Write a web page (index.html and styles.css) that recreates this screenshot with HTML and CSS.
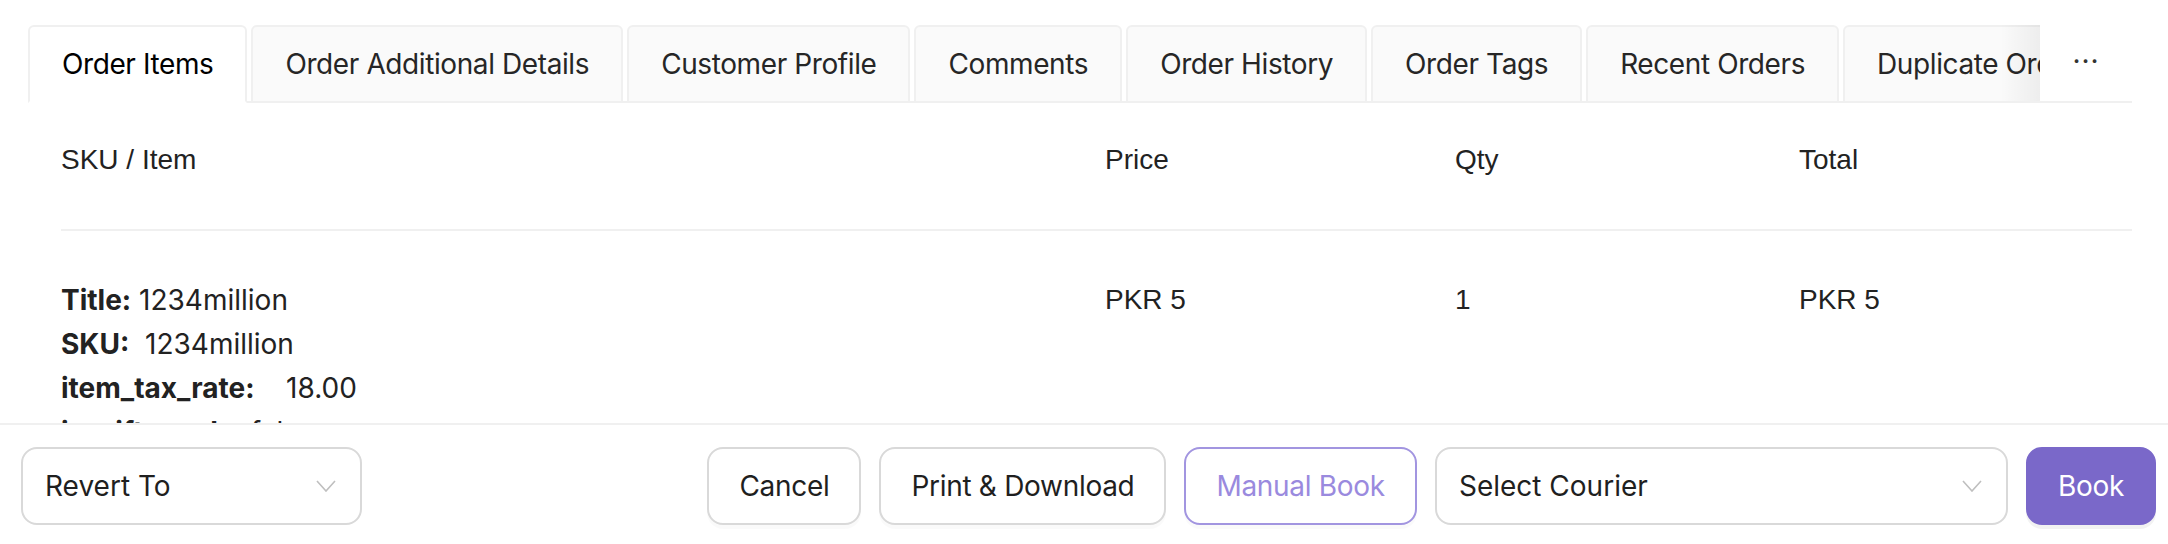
FILE: index.html
```html
<!DOCTYPE html>
<html lang="en">

<head>
    <meta charset="UTF-8">
    <meta name="viewport" content="width=device-width, initial-scale=1.0">
    <title>Order Details</title>
    <link rel="stylesheet" href="styles.css">
</head>

<body>
    <div class="pagina">
        <!-- abas -->
        <div class="abas">
            <div class="abas_lista">
                <div class="aba ativa">Order Items</div>
                <div class="aba">Order Additional Details</div>
                <div class="aba">Customer Profile</div>
                <div class="aba">Comments</div>
                <div class="aba">Order History</div>
                <div class="aba">Order Tags</div>
                <div class="aba">Recent Orders</div>
                <div class="aba">Duplicate Orders</div>
                <div class="aba">Logs</div>
            </div>
            <div class="abas_mais">&middot;&middot;&middot;</div>
        </div>

        <div class="conteudo">
            <table>
                <colgroup>
                    <col class="col_item">
                    <col class="col_preco">
                    <col class="col_qtd">
                    <col>
                </colgroup>
                <thead>
                    <tr>
                        <th>SKU / Item</th>
                        <th>Price</th>
                        <th>Qty</th>
                        <th>Total</th>
                    </tr>
                </thead>
                <tbody>
                    <tr>
                        <td class="detalhes">
                            <p><strong>Title:</strong> 1234million</p>
                            <p><strong>SKU:</strong>&nbsp; 1234million</p>
                            <p><strong>item_tax_rate:</strong>&nbsp;&nbsp;&nbsp; 18.00</p>
                            <p><strong>is_gift_card:</strong>&nbsp;&nbsp; false</p>
                        </td>
                        <td>PKR 5</td>
                        <td>1</td>
                        <td>PKR 5</td>
                    </tr>
                </tbody>
            </table>
        </div>

        <div class="rodape">
            <div class="seletor seletor_reverter">
                <span>Revert To</span>
                <svg class="seta" width="20" height="12" viewBox="0 0 20 12"><polyline points="1,1 10,11 19,1" fill="none" stroke="#bfbfbf" stroke-width="1.6"/></svg>
            </div>
            <div class="acoes">
                <button class="botao">Cancel</button>
                <button class="botao">Print &amp; Download</button>
                <button class="botao botao_contorno">Manual Book</button>
                <div class="seletor seletor_courier">
                    <span>Select Courier</span>
                    <svg class="seta" width="20" height="12" viewBox="0 0 20 12"><polyline points="1,1 10,11 19,1" fill="none" stroke="#bfbfbf" stroke-width="1.6"/></svg>
                </div>
                <button class="botao botao_primario">Book</button>
            </div>
        </div>
    </div>
</body>

</html>
```

FILE: styles.css
```css
* {
    margin: 0;
    padding: 0;
    box-sizing: border-box;
}

body {
    font-family: Inter, "Noto Sans", sans-serif;
    font-size: 28px;
    color: #1f1f1f;
    background: #fff;
}

.pagina {
    height: 544px;
    display: flex;
    flex-direction: column;
    overflow: hidden;
}

/* abas */
.abas {
    display: flex;
    margin: 25px 36px 0 28px;
    position: relative;
}

.abas::before {
    content: "";
    position: absolute;
    left: 0;
    right: 0;
    bottom: 0;
    border-bottom: 2px solid #f0f0f0;
}

.abas_lista {
    display: flex;
    gap: 4px;
    width: 2012px;
    overflow: hidden;
    position: relative;
}

.abas_lista::after {
    content: "";
    position: absolute;
    top: 0;
    right: 0;
    bottom: 2px;
    width: 40px;
    background: linear-gradient(to right, rgba(0, 0, 0, 0), rgba(0, 0, 0, 0.05));
}

.aba {
    flex: none;
    padding: 15px 32px;
    line-height: 44px;
    letter-spacing: -0.4px;
    background: #fafafa;
    border: 2px solid #f0f0f0;
    border-radius: 6px 6px 0 0;
    color: #262626;
    position: relative;
}

.aba.ativa {
    background: #fff;
    border-bottom-color: #fff;
    color: #000;
}

.abas_mais {
    flex: 1;
    display: flex;
    align-items: center;
    justify-content: center;
    color: #333;
    letter-spacing: 1px;
    padding-bottom: 6px;
}

/* tabela */
.conteudo {
    flex: 1;
    overflow: hidden;
    padding: 0 36px 0 61px;
}

table {
    width: 100%;
    border-collapse: collapse;
    table-layout: fixed;
}

.col_item {
    width: 1044px;
}

.col_preco {
    width: 350px;
}

.col_qtd {
    width: 344px;
}

th {
    font-family: "Liberation Sans", Arial, sans-serif;
    font-weight: normal;
    text-align: left;
    line-height: 44px;
    padding: 35px 0 47px;
    color: #222;
    border-bottom: 2px solid #f0f0f0;
}

td {
    font-family: "Liberation Sans", Arial, sans-serif;
    vertical-align: top;
    line-height: 44px;
    padding: 47px 0 0;
    color: #222;
}

td.detalhes {
    font-family: Inter, "Noto Sans", sans-serif;
}

.detalhes strong {
    font-weight: 700;
}

/* rodape */
.rodape {
    height: 121px;
    flex: none;
    border-top: 2px solid #f0f0f0;
    padding: 22px 12px 0 21px;
    display: flex;
    justify-content: space-between;
    align-items: flex-start;
}

.acoes {
    display: flex;
    gap: 18px;
}

.seletor {
    height: 78px;
    border: 2px solid #d9d9d9;
    border-radius: 16px;
    display: flex;
    align-items: center;
    justify-content: space-between;
    padding: 0 24px 0 22px;
    color: #1f1f1f;
}

.seletor_reverter {
    width: 341px;
}

.seletor_courier {
    width: 573px;
}

.seta {
    display: block;
}

.botao {
    height: 78px;
    padding: 0 30px;
    font-family: Inter, "Noto Sans", sans-serif;
    font-size: 28px;
    letter-spacing: -0.3px;
    color: #1f1f1f;
    background: #fff;
    border: 2px solid #d9d9d9;
    border-radius: 16px;
    box-shadow: 0 4px 0 rgba(0, 0, 0, 0.02);
}

.botao_contorno {
    color: #9a8ade;
    border-color: #a295e0;
}

.botao_primario {
    color: #fff;
    background: #7a68c9;
    border-color: #7a68c9;
    box-shadow: 0 4px 0 rgba(0, 0, 0, 0.05);
}
```
